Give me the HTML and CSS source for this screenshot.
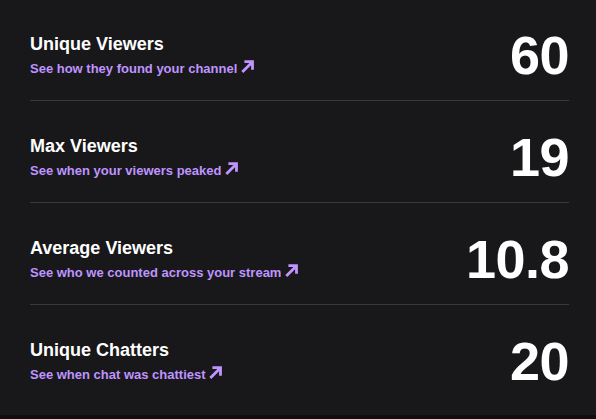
FILE: index.html
```html
<!DOCTYPE html>
<html lang="en">
<head>
<meta charset="utf-8">
<title>Stream stats</title>
<link rel="stylesheet" href="styles.css">
</head>
<body>
<main class="card">
  <section class="row">
    <div class="info">
      <h2 class="title">Unique Viewers</h2>
      <a class="link" href="#">See how they found your channel <svg class="arrow" viewBox="0 0 13 13" width="13" height="13" aria-hidden="true"><path d="M1.3 12 L10.6 2.7 M3.4 1.7 H11.5 V9.8" fill="none" stroke="currentColor" stroke-width="2.8" stroke-linejoin="miter"/></svg></a>
    </div>
    <div class="value">60</div>
  </section>
  <section class="row">
    <div class="info">
      <h2 class="title">Max Viewers</h2>
      <a class="link" href="#">See when your viewers peaked <svg class="arrow" viewBox="0 0 13 13" width="13" height="13" aria-hidden="true"><path d="M1.3 12 L10.6 2.7 M3.4 1.7 H11.5 V9.8" fill="none" stroke="currentColor" stroke-width="2.8" stroke-linejoin="miter"/></svg></a>
    </div>
    <div class="value">19</div>
  </section>
  <section class="row">
    <div class="info">
      <h2 class="title">Average Viewers</h2>
      <a class="link" href="#">See who we counted across your stream <svg class="arrow" viewBox="0 0 13 13" width="13" height="13" aria-hidden="true"><path d="M1.3 12 L10.6 2.7 M3.4 1.7 H11.5 V9.8" fill="none" stroke="currentColor" stroke-width="2.8" stroke-linejoin="miter"/></svg></a>
    </div>
    <div class="value">10.8</div>
  </section>
  <section class="row">
    <div class="info">
      <h2 class="title">Unique Chatters</h2>
      <a class="link" href="#">See when chat was chattiest <svg class="arrow" viewBox="0 0 13 13" width="13" height="13" aria-hidden="true"><path d="M1.3 12 L10.6 2.7 M3.4 1.7 H11.5 V9.8" fill="none" stroke="currentColor" stroke-width="2.8" stroke-linejoin="miter"/></svg></a>
    </div>
    <div class="value">20</div>
  </section>
</main>
</body>
</html>
```
FILE: styles.css
```css
html, body {
  margin: 0;
  padding: 0;
  background: #0e0e10;
}

body {
  font-family: "Liberation Sans", Arial, sans-serif;
  color: #ffffff;
}

.card {
  box-sizing: border-box;
  height: 415px;
  background: #18181b;
  padding: 28px 27px 0 30px;
}

.row {
  display: flex;
  justify-content: space-between;
  align-items: center;
  padding-bottom: 18px;
  border-bottom: 1px solid #3a3a3e;
}

.row + .row {
  padding-top: 29px;
}

.row:last-child {
  border-bottom: none;
}

.info {
  display: flex;
  flex-direction: column;
  align-items: flex-start;
}

.title {
  margin: 0;
  font-size: 18px;
  line-height: 22px;
  font-weight: 700;
  color: #ffffff;
}

.link {
  margin-top: 5px;
  font-size: 13px;
  line-height: 18px;
  font-weight: 700;
  color: #bf94ff;
  text-decoration: none;
}

.arrow {
  vertical-align: baseline;
}

.value {
  font-size: 54px;
  line-height: 54px;
  font-weight: 700;
  letter-spacing: -0.5px;
  color: #ffffff;
}
```
